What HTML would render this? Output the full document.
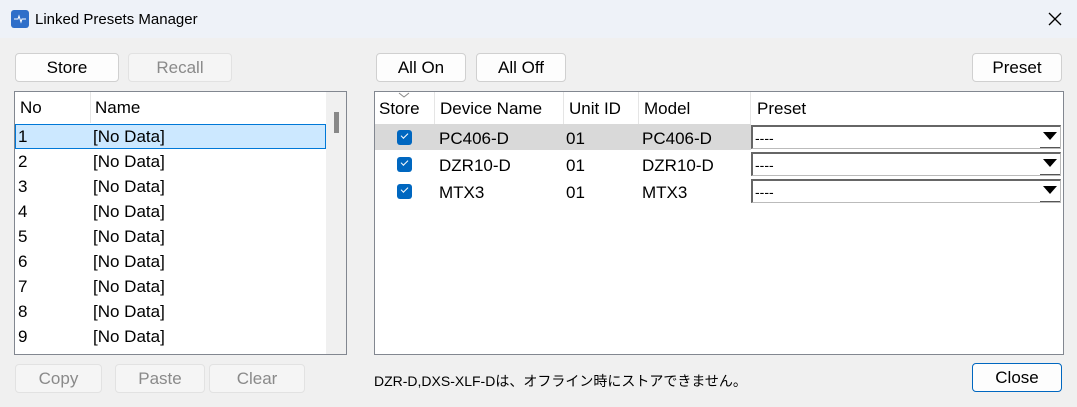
<!DOCTYPE html>
<html><head><style>
*{box-sizing:border-box;margin:0;padding:0}
body{width:1077px;height:407px;background:#f0f0f0;font-family:"Segoe UI","Liberation Sans","Noto Sans CJK JP",sans-serif;font-size:17px;color:#000;position:relative;overflow:hidden}
.a{position:absolute}
.title{left:0;top:0;width:1077px;height:38px;background:#eef2f8}
.btn{position:absolute;height:29px;border:1px solid #d0d0d0;border-radius:4px;background:#fdfdfd;text-align:center;line-height:28px;font-size:17px}
.dis{color:#8a8a8a;background:#f5f5f5;border-color:#e2e2e2}
.box{position:absolute;background:#fff;border:1px solid #828790}
.t{position:absolute;white-space:nowrap}
.cb{position:absolute;width:15px;height:15px;background:#0067c0;border-radius:3px}
.cb:after{content:"";position:absolute;left:4px;top:3px;width:6px;height:3px;border-left:1.3px solid #fff;border-bottom:1.3px solid #fff;transform:rotate(-45deg)}
.dd{position:absolute;left:751px;width:310px;height:24px;background:#fff;border-left:2px solid #666;border-top:2px solid #666;border-right:1px solid #bbb;border-bottom:1px solid #bbb}
.dd span{position:absolute;left:2px;top:2px;font-size:14px;line-height:18px}
.dd i{position:absolute;right:3px;top:5px;width:0;height:0;border-left:7px solid transparent;border-right:7px solid transparent;border-top:8px solid #000}
.dd b{position:absolute;right:0;bottom:0;width:20px;height:0;border-bottom:1px solid #555}
</style></head><body>
<div class="a title"></div>
<div class="a" style="left:11px;top:10px;width:18px;height:18px;background:#2f6fc9;border-radius:3px"></div>
<svg class="a" style="left:11px;top:10px" width="18" height="18"><path d="M3 9H7L8 6L10 12L11 9H15" stroke="#fff" stroke-width="1" fill="none"/></svg>
<div class="t" style="left:35px;top:11px;font-size:15px">Linked Presets Manager</div>
<svg class="a" style="left:1048px;top:12px" width="14" height="14"><path d="M1 1L13 13M13 1L1 13" stroke="#000" stroke-width="1.3"/></svg>

<div class="btn" style="left:15px;top:53px;width:104px">Store</div>
<div class="btn dis" style="left:128px;top:53px;width:104px">Recall</div>
<div class="btn" style="left:376px;top:53px;width:90px">All On</div>
<div class="btn" style="left:476px;top:53px;width:90px">All Off</div>
<div class="btn" style="left:972px;top:53px;width:90px">Preset</div>

<div class="box" style="left:14px;top:91px;width:333px;height:264px">
 <div class="a" style="left:311px;top:0;width:20px;height:262px;background:#f0f0f0"></div>
 <div class="a" style="left:319px;top:20px;width:5px;height:21px;background:#888"></div>
 <div class="a" style="left:75px;top:0;width:1px;height:31px;background:#e5e5e5"></div>
 <div class="t" style="left:5px;top:6px">No</div>
 <div class="t" style="left:80px;top:6px">Name</div>
 <div class="a" style="left:0;top:32px;width:311px;height:25px;background:#cce8ff;border:1px solid #0078d7"></div>
</div>
<div class="a" style="left:18px;top:124px;line-height:25px">1<br>2<br>3<br>4<br>5<br>6<br>7<br>8<br>9</div>
<div class="a" style="left:93px;top:124px;line-height:25px">[No Data]<br>[No Data]<br>[No Data]<br>[No Data]<br>[No Data]<br>[No Data]<br>[No Data]<br>[No Data]<br>[No Data]</div>

<div class="box" style="left:374px;top:91px;width:690px;height:264px">
 <div class="a" style="left:59px;top:0;width:1px;height:32px;background:#e5e5e5"></div>
 <div class="a" style="left:188px;top:0;width:1px;height:32px;background:#e5e5e5"></div>
 <div class="a" style="left:263px;top:0;width:1px;height:32px;background:#e5e5e5"></div>
 <div class="a" style="left:375px;top:0;width:1px;height:32px;background:#e5e5e5"></div>
 <div class="a" style="left:0;top:32px;width:376px;height:26px;background:#d9d9d9"></div>
</div>
<svg class="a" style="left:398px;top:92px" width="12" height="6"><path d="M1 1L6 5L11 1" stroke="#888" fill="none"/></svg>
<div class="t" style="left:379px;top:99px">Store</div>
<div class="t" style="left:440px;top:99px">Device Name</div>
<div class="t" style="left:569px;top:99px">Unit ID</div>
<div class="t" style="left:644px;top:99px">Model</div>
<div class="t" style="left:757px;top:99px">Preset</div>

<div class="cb" style="left:397px;top:130px"></div>
<div class="cb" style="left:397px;top:157px"></div>
<div class="cb" style="left:397px;top:184px"></div>
<div class="t" style="left:439px;top:129px">PC406-D</div>
<div class="t" style="left:439px;top:156px">DZR10-D</div>
<div class="t" style="left:439px;top:183px">MTX3</div>
<div class="t" style="left:566px;top:129px">01</div>
<div class="t" style="left:566px;top:156px">01</div>
<div class="t" style="left:566px;top:183px">01</div>
<div class="t" style="left:642px;top:129px">PC406-D</div>
<div class="t" style="left:642px;top:156px">DZR10-D</div>
<div class="t" style="left:642px;top:183px">MTX3</div>
<div class="dd" style="top:125px"><span>----</span><i></i><b></b></div>
<div class="dd" style="top:152px"><span>----</span><i></i><b></b></div>
<div class="dd" style="top:179px"><span>----</span><i></i><b></b></div>

<div class="btn dis" style="left:15px;top:364px;width:87px">Copy</div>
<div class="btn dis" style="left:115px;top:364px;width:90px">Paste</div>
<div class="btn dis" style="left:209px;top:364px;width:96px">Clear</div>
<div class="t" style="left:374px;top:371px;font-size:14px">DZR-D,DXS-XLF-Dは、オフライン時にストアできません。</div>
<div class="btn" style="left:972px;top:363px;width:90px;border-color:#0067c0">Close</div>
</body></html>
